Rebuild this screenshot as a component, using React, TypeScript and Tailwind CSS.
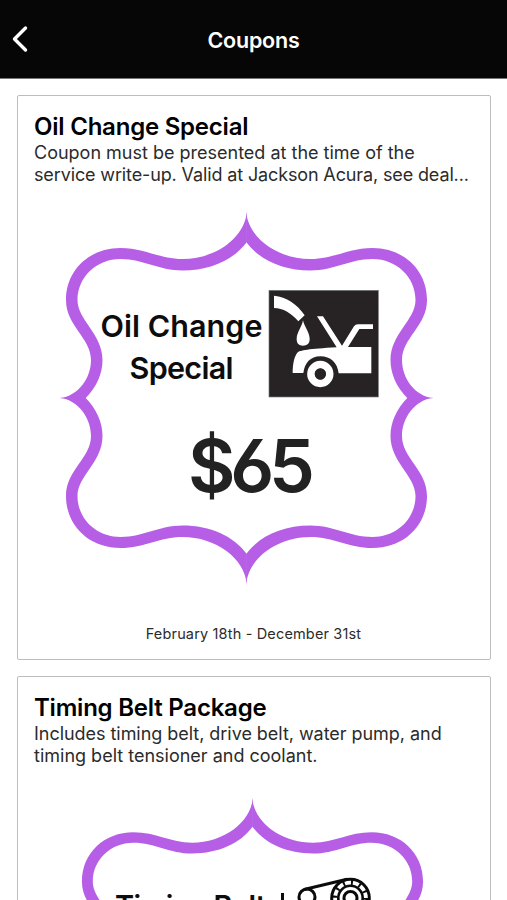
import type { ReactNode } from "react";

const quadrant =
  "M0.3 -186 C-2 -160 -31 -139 -64 -139 C-87 -139 -102 -150 -126 -150 C-157 -150 -180.5 -128 -180.5 -98 C-180.5 -72 -155.5 -60 -155.5 -38 C-155.5 -20 -168 -2 -187 0.3 L-161 0.3 C-150 -11 -144 -24 -144 -38 C-144 -64 -169 -78 -169 -98 C-169 -121 -150 -139 -126 -139 C-103 -139 -88 -127.5 -64 -127.5 C-36 -127.5 -13 -138 0.3 -156 Z";

function Frame({ transform }: { transform: string }) {
  return (
    <g transform={transform} fill="#b65fe6">
      <path d={quadrant} />
      <path d={quadrant} transform="scale(-1 1)" />
      <path d={quadrant} transform="scale(1 -1)" />
      <path d={quadrant} transform="scale(-1 -1)" />
    </g>
  );
}

function OilIcon() {
  return (
    <g transform="translate(260 285) scale(0.3333)">
      <rect x="27" y="16" width="328" height="320" fill="#272223" stroke="#777" strokeWidth="2" />
      <g fill="#fff">
        <path d="M42 32 C80 36 110 56 134 91 L115 109 C93 83 69 70 42 69 Z" />
        <path d="M129 106 C134 128 149 142 149 162 C149 176 141 182 129 182 C117 182 110 176 110 162 C110 142 125 128 129 106 Z" />
        <path d="M171 94 H189 L246 182 L282 124 Q286 118 294 118 H339 V132 H298 L264 186 H334 V265 H236 C232 233 212 214 181 214 C151 214 134 234 130 264 H98 C98 236 103 214 112 203 C120 196 145 192 230 187 Z" />
      </g>
      <circle cx="181" cy="267" r="28" fill="#272223" stroke="#fff" strokeWidth="23" />
      <circle cx="181" cy="267" r="17" fill="#272223" />
    </g>
  );
}

function BeltIcon() {
  return (
    <g fill="none" stroke="#0b0b0b" strokeWidth="3">
      <circle cx="307" cy="897" r="8" />
      <path d="M304 889.5 L347 879.3" />
      <circle cx="350.5" cy="898" r="18.8" />
      <circle cx="350.5" cy="898" r="12.2" strokeWidth="2.6" />
      <circle cx="350.5" cy="898" r="15.5" strokeWidth="5" strokeDasharray="2 6.12" />
      <circle cx="350.5" cy="898" r="6.5" strokeWidth="3" />
    </g>
  );
}

function Coupon({ title, lines, children, date }: { title: string; lines: ReactNode; children: ReactNode; date: string }) {
  return (
    <article className="flex h-[565px] shrink-0 flex-col rounded-[2px] border border-[#bdbdbd] px-[16px] pt-[17px]">
      <h2 className="h-[29px] whitespace-nowrap text-[24px] leading-[27px] font-semibold tracking-[-0.22px] text-black">{title}</h2>
      <p className="h-[44px] whitespace-nowrap text-[18px] leading-[22px] text-[#2b2b2b]">{lines}</p>
      {children}
      <p className="mt-[14px] pr-px text-center text-[14.5px] leading-[20px] tracking-[0.16px] text-[#2b2b2b]">{date}</p>
    </article>
  );
}

export default function App() {
  return (
    <div className="flex h-[900px] w-[507px] flex-col overflow-hidden bg-white font-['Inter',sans-serif]">
      <header className="grid h-[79px] shrink-0 grid-cols-[60px_1fr_60px] items-center border-b border-[#777] bg-[#060606] text-white">
        <svg className="ml-[5px] h-[30px] w-[30px]" viewBox="6 24.5 30 30" fill="none" stroke="white" strokeWidth="3.4" strokeLinecap="round" strokeLinejoin="round">
          <path d="M26.5 28.5 L15.5 39.5 L26.5 50.5" />
        </svg>
        <h1 className="pt-px text-center text-[21.5px] leading-[28px] font-semibold tracking-[-0.2px]">Coupons</h1>
      </header>
      <main className="flex flex-col gap-4 pt-[16px] pr-[16px] pl-[17px]">
        <Coupon
          title="Oil Change Special"
          lines={<>Coupon must be presented at the time of the<br /><span className="tracking-[-0.13px]">service write-up. Valid at Jackson Acura, see deal...</span></>}
          date="February 18th - December 31st"
        >
          <svg className="h-[424px] w-[438px] shrink-0" viewBox="34 186 438 424">
            <Frame transform="translate(246.5 398)" />
            <g fontFamily="Inter, sans-serif" fontWeight="600" fill="#0d0d0d">
              <text x="100.5" y="337" fontSize="30.5" textLength="162">Oil Change</text>
              <text x="129.5" y="379" fontSize="30.5" textLength="104">Special</text>
            </g>
            <text x="188" y="492" fontSize="73" textLength="127" fontFamily="Inter, sans-serif" fontWeight="600" fill="#222" className="[font-feature-settings:'cv03','ss01']">$65</text>
            <OilIcon />
          </svg>
        </Coupon>
        <Coupon
          title="Timing Belt Package"
          lines={<><span className="tracking-[-0.04px]">Includes timing belt, drive belt, water pump, and</span><br />timing belt tensioner and coolant.</>}
          date="February 18th - December 31st"
        >
          <svg className="h-[424px] w-[438px] shrink-0" viewBox="34 767 438 424">
            <Frame transform="translate(252.5 974) scale(0.945)" />
            <text x="115" y="916" fontSize="29" fontFamily="Inter, sans-serif" fontWeight="600" fill="#0d0d0d" textLength="151">Timing Belt</text>
            <rect x="281" y="893" width="3" height="24" fill="#0d0d0d" />
            <BeltIcon />
          </svg>
        </Coupon>
      </main>
    </div>
  );
}
